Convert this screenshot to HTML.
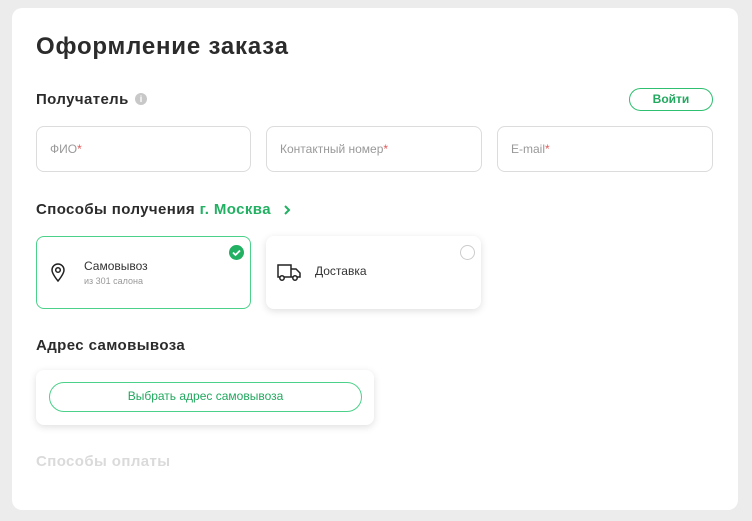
<!DOCTYPE html>
<html><head><meta charset="utf-8"><style>
*{box-sizing:border-box;margin:0;padding:0}
body{width:752px;height:521px;background:#ececec;font-family:"Liberation Sans",sans-serif;position:relative;overflow:hidden;color:#222}
.card{position:absolute;left:12px;top:8px;width:726px;height:502px;background:#fff;border-radius:10px}
.a{position:absolute}
h1{position:absolute;left:36px;top:33px;font-size:24px;font-weight:bold;color:#2b2b2b;letter-spacing:0.8px}
.h{font-size:15px;font-weight:bold;color:#2b2b2b;letter-spacing:0.4px}
.inp{position:absolute;top:126px;height:46px;border:1px solid #dcdcdc;border-radius:8px;font-size:12px;color:#999;padding:15px 0 0 13px}
.inp b{color:#e05a5a;font-weight:normal}
.opt{position:absolute;top:236px;height:73px;width:215px;border-radius:8px;background:#fff}
</style></head><body>
<div class="card"></div>
<h1>Оформление заказа</h1>
<div class="a h" style="left:36px;top:91px">Получатель</div>
<div class="a" style="left:135px;top:93px;width:12px;height:12px;border-radius:50%;background:#c8c8c8;color:#fff;font-size:9px;font-weight:bold;text-align:center;line-height:12px">i</div>
<div class="a" style="left:629px;top:88px;width:84px;height:23px;border:1.5px solid #2fbf71;border-radius:12px;color:#22a85f;font-size:12px;font-weight:bold;text-align:center;line-height:20px">Войти</div>
<div class="inp" style="left:36px;width:215px">ФИО<b>*</b></div>
<div class="inp" style="left:266px;width:216px">Контактный номер<b>*</b></div>
<div class="inp" style="left:497px;width:216px">E-mail<b>*</b></div>
<div class="a h" style="left:36px;top:201px">Способы получения <span style="color:#22b062">г. Москва</span></div>
<svg class="a" style="left:282px;top:204px" width="10" height="12"><path d="M3 2l4 4-4 4" stroke="#22b062" stroke-width="2" fill="none"/></svg>
<div class="opt" style="left:36px;border:1px solid #4cd18b"></div>
<svg class="a" style="left:49px;top:261px" width="18" height="22" viewBox="0 0 18 22"><path d="M9 20s-6-7-6-11a6 6 0 0112 0c0 4-6 11-6 11z" stroke="#222" stroke-width="1.5" fill="none"/><circle cx="9" cy="9" r="2.3" stroke="#222" stroke-width="1.5" fill="none"/></svg>
<div class="a" style="left:84px;top:259px;font-size:12px;color:#333">Самовывоз</div>
<div class="a" style="left:84px;top:276px;font-size:9px;color:#999">из 301 салона</div>
<div class="a" style="left:229px;top:245px;width:15px;height:15px;border-radius:50%;background:#22b062"></div>
<svg class="a" style="left:229px;top:245px" width="15" height="15"><path d="M4 7.5l2.5 2.5 4.5-4.5" stroke="#fff" stroke-width="1.8" fill="none"/></svg>
<div class="opt" style="left:266px;box-shadow:0 2px 8px rgba(0,0,0,.13)"></div>
<svg class="a" style="left:276px;top:262px" width="26" height="20" viewBox="0 0 26 20"><path d="M2 3h13v12H2zM15 7h5l4 4v4h-9" stroke="#222" stroke-width="1.5" fill="#fff"/><circle cx="6" cy="16" r="2.2" stroke="#222" stroke-width="1.5" fill="#fff"/><circle cx="19" cy="16" r="2.2" stroke="#222" stroke-width="1.5" fill="#fff"/></svg>
<div class="a" style="left:315px;top:264px;font-size:12px;color:#333">Доставка</div>
<div class="a" style="left:460px;top:245px;width:15px;height:15px;border-radius:50%;border:1px solid #ccc"></div>
<div class="a h" style="left:36px;top:337px">Адрес самовывоза</div>
<div class="a" style="left:36px;top:370px;width:338px;height:55px;border-radius:8px;box-shadow:0 2px 8px rgba(0,0,0,.13);background:#fff"></div>
<div class="a" style="left:49px;top:382px;width:313px;height:30px;border:1.5px solid #4cd18b;border-radius:15px;color:#22a85f;font-size:12px;text-align:center;line-height:27px">Выбрать адрес самовывоза</div>
<div class="a h" style="left:36px;top:453px;color:#dadada">Способы оплаты</div>
</body></html>
